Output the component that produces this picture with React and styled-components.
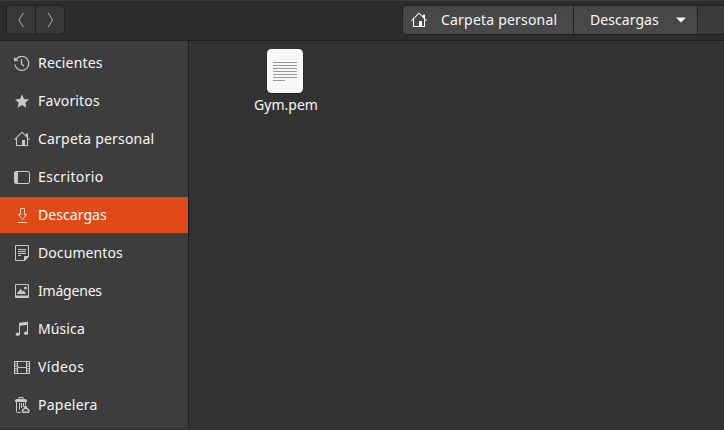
import React from "react";
import styled, { createGlobalStyle } from "styled-components";

const GlobalStyle = createGlobalStyle`
  * { box-sizing: border-box; }
  html, body { margin: 0; padding: 0; background: #333333; overflow: hidden; }
  button { font: inherit; color: inherit; margin: 0; padding: 0; border: 0; background: none; }
`;

const Window = styled.div`
  width: 724px;
  height: 430px;
  display: flex;
  flex-direction: column;
  overflow: hidden;
  background: #333333;
  color: #f7f7f7;
  font: 14px/20px "Noto Sans", "Open Sans", sans-serif;
`;

const HeaderBar = styled.header`
  height: 41px;
  flex: none;
  display: flex;
  align-items: flex-start;
  justify-content: space-between;
  padding: 4px 0 0 6px;
  background: #2c2c2c;
  border-top: 1px solid #3b3b3b;
  border-bottom: 1px solid #1f1f1f;
`;

const NavGroup = styled.nav`
  display: flex;
  width: 59px;
  height: 30px;
  border: 1px solid #202020;
  border-radius: 5px;
  background: #373737;
`;

const NavButton = styled.button`
  flex: 1;
  display: flex;
  align-items: center;
  justify-content: center;
  & + & { border-left: 1px solid #202020; }
`;

const PathBar = styled.nav`
  display: flex;
  width: 322px;
  height: 30px;
  border: 1px solid #202020;
  border-right: 0;
  border-radius: 5px 0 0 5px;
  background: #3b3b3b;
  overflow: hidden;
`;

const PathButton = styled.button`
  width: ${(p) => p.$width}px;
  flex: none;
  display: flex;
  align-items: center;
  padding-left: ${(p) => p.$inset}px;
  gap: ${(p) => p.$gap}px;
  background: linear-gradient(#464646, #494949);
  border-right: 1px solid #202020;
`;

const Label = styled.span`
  white-space: nowrap;
  letter-spacing: ${(p) => p.$track || 0}px;
`;

const Body = styled.div`
  flex: 1;
  display: flex;
  min-height: 0;
`;

const Sidebar = styled.aside`
  width: 189px;
  flex: none;
  padding-top: 4px;
  display: flex;
  flex-direction: column;
  gap: 2px;
  background: #3d3d3d;
  border-right: 1px solid #202020;
`;

const Place = styled.div`
  height: 36px;
  flex: none;
  display: flex;
  align-items: center;
  gap: 8px;
  padding-left: 14px;
  color: ${(p) => (p.$active ? "#ffffff" : "#f7f7f7")};
  background: ${(p) => (p.$active ? "#e04a17" : "transparent")};
  & svg { color: ${(p) => (p.$active ? "#f7d2c4" : "#c8c8c8")}; }
`;

const Icon = styled.svg`
  width: 16px;
  height: 16px;
  flex: none;
  display: block;
  overflow: visible;
`;

const Files = styled.main`
  flex: 1;
  padding: 7px 0 0 45px;
`;

const File = styled.figure`
  width: 104px;
  margin: 0;
  display: flex;
  flex-direction: column;
  align-items: center;
`;

const Sheet = styled.svg`
  width: 40px;
  height: 47px;
  display: block;
  margin-right: 2px;
`;

const BottomEdge = styled.footer`
  height: 2px;
  flex: none;
  background: #352f33;
`;

const stroke = { fill: "none", stroke: "currentColor", strokeWidth: 1 };

const glyphs = {
  recent: (
    <>
      <path {...stroke} strokeWidth="1.2" d="M2.2 4.2A7 7 0 1 1 .9 9.500" />
      <path fill="currentColor" d="M0 2v4.300l4.500-.6z" />
      <path {...stroke} strokeWidth="1.2" d="M7.500 4v5l2.500 2.300" />
    </>
  ),
  star: <path fill="currentColor" d="M8 1.300l2 4.700 5 .5-3.700 3.200 1.100 5L8 12.100l-4.400 2.600 1.100-5L1 6.500l5-.5z" />,
  home: (
    <>
      <path {...stroke} strokeWidth="1.1" d="M.5 8.700L8 1.200l7.500 7.500M2.500 7.200v7.300h11V7.200M12.500 5.200V3h1v3.200" />
      <path fill="currentColor" d="M8 9h3v6H8z" />
    </>
  ),
  desktop: (
    <>
      <rect {...stroke} x=".5" y="2.500" width="15" height="12" rx="1.500" />
      <path fill="currentColor" d="M1 3h3v11H1z" />
    </>
  ),
  download: <path {...stroke} d="M6.500 1.500h4v6h2L8.500 12.800 4.500 7.500h2zM4 15.500h9" />,
  document: (
    <>
      <path {...stroke} d="M10.500 15.500h-9V.5h13v11M4 4.500h8M4 6.500h8M4 8.500h8M4 10.500h3" />
      <path fill="currentColor" d="M10 11h5v.8L10.800 16H10z" />
    </>
  ),
  image: (
    <>
      <path {...stroke} d="M1.500 1.500h13v13h-13z" />
      <path fill="currentColor" d="M1 12.500h14V15H1zM3 11l1.200-3 .8.500L6.500 5.500l2 3L10 7.500l2 3.500z" />
      <circle cx="11.500" cy="5" r="1.500" fill="currentColor" />
    </>
  ),
  music: (
    <>
      <path {...stroke} d="M5.500 13V2.500l8-1.200V12" />
      <path fill="currentColor" d="M5 2l9-1.200v3L5 5z" />
      <ellipse cx="3.800" cy="13.300" rx="2.100" ry="1.800" fill="currentColor" />
      <ellipse cx="12" cy="12.300" rx="2.100" ry="1.800" fill="currentColor" />
    </>
  ),
  video: (
    <>
      <path {...stroke} d="M.5 2v13M3.500 2v13M12.500 2v13M15.500 2v13M3 2.500h10M3 8.500h10M3 14.500h10" />
      <path {...stroke} strokeWidth="2" strokeDasharray="1 1.400" d="M2 2v13M14 2v13" />
    </>
  ),
  trash: (
    <>
      <path fill="currentColor" d="M1 4q0-2 2-2h1.500V.5Q4.500 0 5 0h4q.5 0 .5.500V2H11q2 0 2 2v1H1z" />
      <path d="M5.500 1.500h3" stroke="#3d3d3d" />
      <path {...stroke} d="M2.500 5v9.500q0 1 1 1H7M5.500 6v6.500M7.500 6v5M9.500 6v4M11.500 5v3" />
      <path {...stroke} strokeWidth="1.500" d="M10 9.800h3M10.800 11.300Q7.500 13 9 15.200h5.500Q16 13 12.500 11.300z" />
    </>
  ),
};

const places = [
  { icon: "recent", name: "Recientes", track: 0.17 },
  { icon: "star", name: "Favoritos", track: 0.17 },
  { icon: "home", name: "Carpeta personal", track: 0.2 },
  { icon: "desktop", name: "Escritorio", track: 0.36 },
  { icon: "download", name: "Descargas", track: 0.06, active: true },
  { icon: "document", name: "Documentos", track: 0.08 },
  { icon: "image", name: "Imágenes", track: -0.2 },
  { icon: "music", name: "Música", track: 0.1 },
  { icon: "video", name: "Vídeos", track: 0.45 },
  { icon: "trash", name: "Papelera", track: 0.25 },
];

const Glyph = ({ name }) => <Icon viewBox="0 0 16 16">{glyphs[name]}</Icon>;

export default function App() {
  return (
    <Window>
      <GlobalStyle />
      <HeaderBar>
        <NavGroup>
          <NavButton aria-label="Atrás">
            <Icon viewBox="0 0 16 16"><path d="M10.300 1L6 8l4.300 7" fill="none" stroke="#999" strokeWidth="1.200" /></Icon>
          </NavButton>
          <NavButton aria-label="Adelante">
            <Icon viewBox="0 0 16 16"><path d="M6.200 1l4.300 7-4.300 7" fill="none" stroke="#999" strokeWidth="1.200" /></Icon>
          </NavButton>
        </NavGroup>
        <PathBar>
          <PathButton $width={171} $inset={8} $gap={14}>
            <Glyph name="home" />
            <Label $track={0.2}>Carpeta personal</Label>
          </PathButton>
          <PathButton $width={124} $inset={16} $gap={17}>
            <Label $track={0.06}>Descargas</Label>
            <svg width="10" height="6" viewBox="0 0 10 6"><path d="M0 .5h10L5 5.500z" fill="#f7f7f7" /></svg>
          </PathButton>
        </PathBar>
      </HeaderBar>
      <Body>
        <Sidebar>
          {places.map((p) => (
            <Place key={p.name} $active={p.active}>
              <Glyph name={p.icon} />
              <Label $track={p.track}>{p.name}</Label>
            </Place>
          ))}
        </Sidebar>
        <Files>
          <File>
            <Sheet viewBox="0 0 40 47">
              <rect x="1.500" y="1.500" width="37" height="45" rx="5" fill="#252525" />
              <rect x="2" y="1" width="36" height="44" rx="4.500" fill="#f8f8f8" />
              <path d="M8 14.500h24M8 17.500h24M8 20.500h24M8 23.500h24M8 26.500h24M8 29.500h24M8 32.500h12" stroke="#999" />
            </Sheet>
            <Label>Gym.pem</Label>
          </File>
        </Files>
      </Body>
      <BottomEdge />
    </Window>
  );
}
